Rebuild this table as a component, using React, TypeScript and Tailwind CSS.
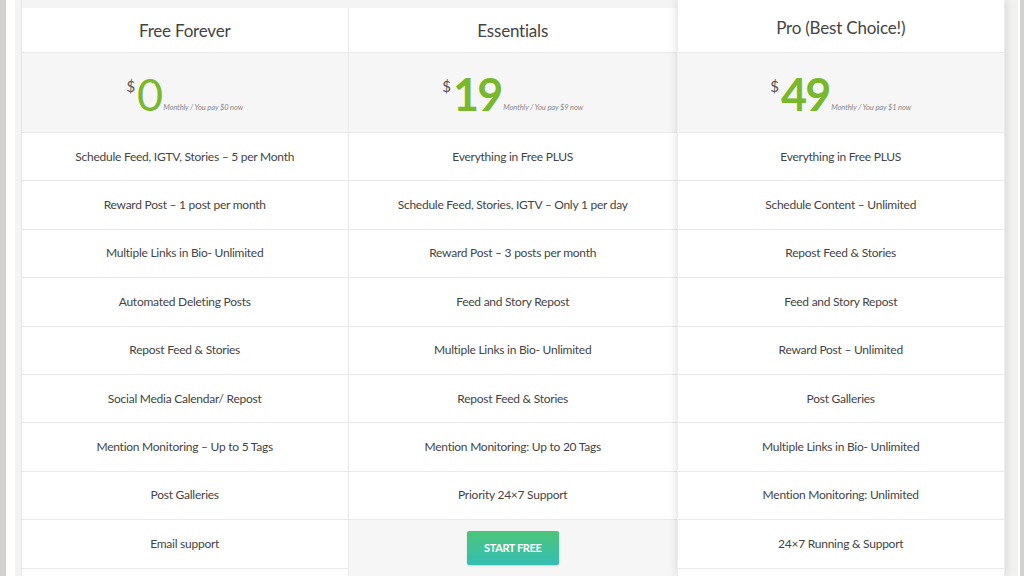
import React from "react";

type Plan = {
  title: string;
  price: string;
  note: string;
  bold: boolean;
  features: string[];
  button?: boolean;
};

const plans: Plan[] = [
  {
    title: "Free Forever",
    price: "0",
    note: "Monthly / You pay $0 now",
    bold: false,
    features: [
      "Schedule Feed, IGTV, Stories – 5 per Month",
      "Reward Post – 1 post per month",
      "Multiple Links in Bio- Unlimited",
      "Automated Deleting Posts",
      "Repost Feed & Stories",
      "Social Media Calendar/ Repost",
      "Mention Monitoring – Up to 5 Tags",
      "Post Galleries",
      "Email support",
    ],
  },
  {
    title: "Essentials",
    price: "19",
    note: "Monthly / You pay $9 now",
    bold: true,
    features: [
      "Everything in Free PLUS",
      "Schedule Feed, Stories, IGTV – Only 1 per day",
      "Reward Post – 3 posts per month",
      "Feed and Story Repost",
      "Multiple Links in Bio- Unlimited",
      "Repost Feed & Stories",
      "Mention Monitoring: Up to 20 Tags",
      "Priority 24×7 Support",
    ],
    button: true,
  },
  {
    title: "Pro (Best Choice!)",
    price: "49",
    note: "Monthly / You pay $1 now",
    bold: true,
    features: [
      "Everything in Free PLUS",
      "Schedule Content – Unlimited",
      "Repost Feed & Stories",
      "Feed and Story Repost",
      "Reward Post – Unlimited",
      "Post Galleries",
      "Multiple Links in Bio- Unlimited",
      "Mention Monitoring: Unlimited",
      "24×7 Running & Support",
    ],
  },
];

const Column: React.FC<{ plan: Plan; featured?: boolean; className: string }> = ({ plan, featured, className }) => {
  return (
    <div
      className={`flex flex-col bg-white ${className} ${
        featured ? "relative z-10 shadow-[0_0_9px_rgba(0,0,0,0.13)] border-x border-[#ececec]" : ""
      }`}
    >
      <div
        className={`flex items-center justify-center text-[17px] tracking-[-0.2px] text-[#444] border-b border-[#e9e9e9] ${
          featured ? "h-[53px] pt-[3px]" : "h-[45px] pt-[1px]"
        }`}
      >
        {plan.title}
      </div>
      <div className="h-[80px] bg-[#f6f6f6] flex items-center justify-center border-b border-[#e9e9e9] pt-[3px]">
        <div className="flex items-end">
          <span className="self-start text-[15px] text-[#555] mt-[1px] mr-[2px]">$</span>
          <span
            className={`text-[45px] leading-[40px] tracking-[-2px] text-[#78b82a] ${
              plan.bold ? "font-bold" : "font-normal"
            }`}
          >
            {plan.price}
          </span>
          <span className="text-[7.5px] italic text-[#888] tracking-[-0.1px] mb-[1px] ml-[2px]">{plan.note}</span>
        </div>
      </div>
      {plan.features.map((f, i) => (
        <div
          key={i}
          className="h-[48.4px] shrink-0 flex items-center justify-center border-b border-[#e9e9e9] text-[12px] tracking-[-0.25px] text-[#444]"
        >
          {f}
        </div>
      ))}
      {plan.button && (
        <div className="h-[48.4px] shrink-0 bg-[#f6f6f6] flex items-center justify-center pt-[8px]">
          <button className="w-[92px] h-[34px] rounded-[2px] bg-gradient-to-b from-[#4cc577] to-[#35bdb3] text-white text-[11px] tracking-[-0.4px] font-bold shadow-[0_1px_2px_rgba(0,0,0,0.15)]">
            START FREE
          </button>
        </div>
      )}
      <div className={`flex-1 ${plan.button ? "bg-[#f6f6f6]" : "bg-white"}`} />
    </div>
  );
};

export default function App() {
  return (
    <div
      className="w-[1024px] h-[576px] overflow-hidden flex bg-[#f4f4f4]"
      style={{ fontFamily: "Lato, 'Open Sans', sans-serif" }}
    >
      <div className="w-[6px] bg-[#d4d1d1]" />
      <div className="w-[10px] bg-white" />
      <div className="flex-1 flex pl-[6px]">
        <div className="flex pt-[8px] border-l border-[#e6e6e6]">
          <Column plan={plans[0]} className="w-[327px] border-r border-[#e9e9e9]" />
          <Column plan={plans[1]} className="w-[328px]" />
        </div>
        <Column plan={plans[2]} featured className="w-[328px]" />
      </div>
      <div className="w-[14px] bg-[#f1f1f1]" />
      <div className="w-[3px] bg-white" />
      <div className="w-[4px] bg-[#d4d1d1]" />
    </div>
  );
}
